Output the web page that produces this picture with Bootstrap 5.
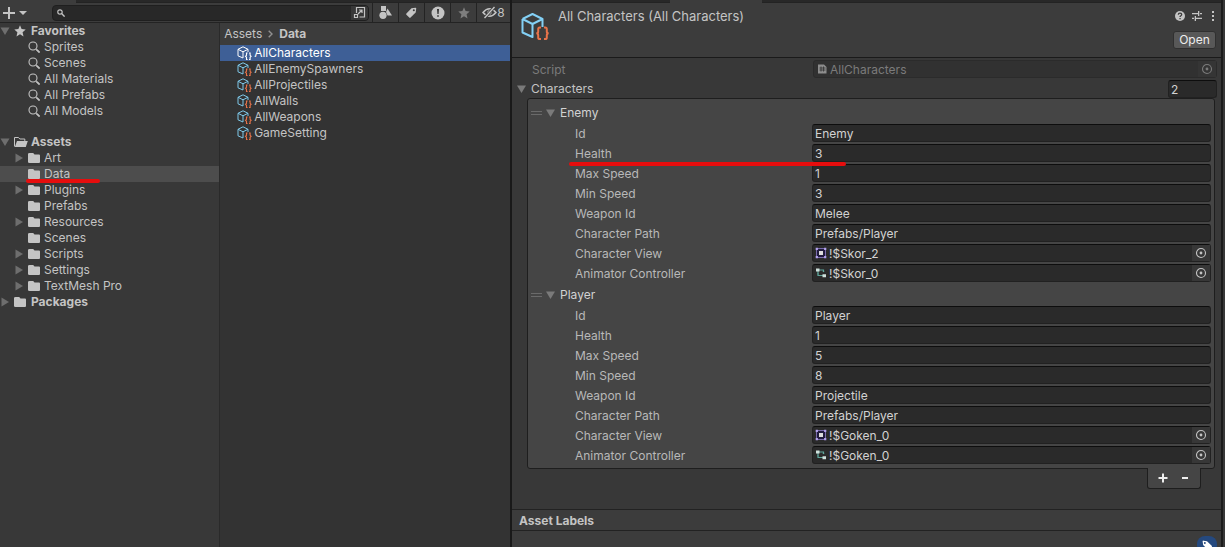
<!DOCTYPE html>
<html lang="en">
<head>
<meta charset="utf-8">
<meta name="viewport" content="width=device-width, initial-scale=1">
<title>Project and Inspector</title>
<link href="https://cdn.jsdelivr.net/npm/bootstrap@5.3.0/dist/css/bootstrap.min.css" rel="stylesheet">
<style>
body{font-family:Inter,"Noto Sans",sans-serif;font-size:12px;line-height:16px;color:#c4c4c4;background:#383838}
svg{display:block;flex:none;fill:currentColor}
a{color:inherit;text-decoration:none}
button{font:inherit;color:inherit}
.editor{min-width:900px}
.project-pane{flex:510 1 0;border-right:2px solid #191919;min-width:0;box-sizing:content-box}
.inspector-pane{flex:709 1 0;border-right:2px solid #1c1c1c;min-width:0;box-sizing:content-box}
.edge-strip{flex:0 0 2px;background:#383838}
.tab-strip{flex:none;height:3px;background:#282828;border-bottom:1px solid #232323}
.tab-strip span{background:#3c3c3c;height:3px}
.toolbar-row{flex:none;height:20px;background:#3c3c3c;border-bottom:1px solid #232323}
.tool-add{width:52px;padding:0 0 0 3px!important;gap:4px}
.search-field{background:#282828;border:1px solid #1f1f1f;border-radius:4px;height:16px;overflow:hidden;margin-right:3px}
.search-field input{background:none;border:0;outline:0;color:inherit;min-width:0;padding:0;height:14px}
.search-field button{background:#383838;width:17px;height:14px}
.tool-btn{width:26px;height:19px;border-left:1px solid #232323!important}
.tool-btn.wide{width:34px}
.flat{background:none;border:0;padding:0;display:flex;align-items:center;justify-content:center}
.tree-pane{flex:220 1 0;background:#383838;border-right:1px solid #2a2a2a;min-width:0}
.files-pane{flex:291 1 0;background:#333;min-width:0}
.tree-row{display:flex;align-items:center;height:16px;position:relative;white-space:nowrap}
.tree-row .twist{width:14px;flex:none;color:#6e6e6e}
.tree-row .glyph{width:17px;flex:none}
.tree-row.sub{padding-left:14px}
.tree-row.sub .glyph{width:16px}
.tree-row.active{background:#4d4d4d}
.gap-row{height:15px}
.crumbs{height:22px;background:#3c3c3c;padding-left:4px}
.crumbs svg{margin:0 6px}
.file-row{display:flex;align-items:center;height:16px;padding-left:17px;gap:2px;--cube:#7fc9ea;--brace:#e8734a}
.file-row.active{background:#3e5f96;color:#fff;--cube:#fff;--brace:#fff}
.red-mark{position:absolute;height:4px;border-radius:2px;background:#e60d0d;z-index:2}
.mark-data{left:26px;top:13px;width:74px}
.mark-health{left:-6px;top:18px;width:277px}
.head-bar{flex:none;height:55px;background:#3c3c3c;border-bottom:1px solid #1a1a1a;--cube:#83d0f5;--brace:#e8734a;padding:5px 5px 0 8px;gap:8px}
.head-bar .asset-name{font-size:13px}
.head-tools{gap:5px;margin-bottom:7px}
.btn-open{background:#585858;border:1px solid #303030;border-radius:3px;color:#eee;width:43px;height:18px;padding:0;line-height:16px}
.prop-row{display:flex;align-items:center;height:18px;margin-bottom:2px;position:relative}
.prop-row label{flex:none}
.field-box{display:flex;align-items:center;flex:1 1 0;min-width:0;height:18px;background:#2a2a2a;border:1px solid #212121;border-top-color:#0d0d0d;border-radius:3px;color:#d2d2d2;padding:0 0 0 2px;outline:0}
.field-box input{background:none;border:0;outline:0;color:inherit;min-width:0;flex:1;padding:2px 0 0 2px;height:16px}
.field-box .pick{width:18px;height:16px;background:#373737;color:#c4c4c4}
.disabled-row{color:#7b7b7b}
.disabled-row .field-box{background:#313131;border-color:#2b2b2b;color:#7b7b7b}
.disabled-row .pick{background:#353535;color:#7b7b7b}
.script-icon{margin:0 1px}
.script-label{width:281px;padding-top:2px}
.prop-label{width:237px;color:#b8b8b8;padding-top:2px}
.props-body{padding-top:2px}
.list-box{background:#454545;border:1px solid #1e1e1e;border-radius:3px;margin:0 6px 0 15px;padding:4px 3px 1px 0}
.item-head{display:flex;align-items:center;height:20px;padding-left:3px;color:#d2d2d2;margin-bottom:1px}
.item-head .grip{color:#6a6a6a;width:14px}
.item-head .twist,.list-head .twist{color:#7a7a7a}
.item-props{padding-left:47px;margin-bottom:3px}
.list-foot{width:54px;height:21px;background:#454545;border:1px solid #1e1e1e;border-top:0;border-radius:0 0 3px 3px;margin:-1px 20px 0 auto;position:relative;color:#eee}
.list-foot button{width:22px;height:20px}
.size-field{flex:0 0 49px}
.labels-bar{flex:none;height:22px;background:#3c3c3c;border-top:1px solid #222;border-bottom:1px solid #222;padding-left:7px;line-height:22px;margin-top:20px}
.labels-body{background:#3c3c3c;flex:1;padding:5px 4px 0 0}
.tag-btn{width:20px;height:17px;border-radius:8px;background:#25497f;color:#fff}
</style>
</head>
<body>
<svg width="0" height="0" class="position-absolute" aria-hidden="true">
<symbol id="down" viewBox="0 0 10 10"><path d="M.5 1.5h9L5 9z"/></symbol>
<symbol id="right" viewBox="0 0 10 10"><path d="M1.5.5v9L9 5z"/></symbol>
<symbol id="folder" viewBox="0 0 13 12"><path d="M1.500 1h3.700l1.300 1.500h4.500q1 0 1 1v6.500q0 1-1 1h-9.500q-1.500 0-1.500-1v-8q0-1 1.500-1z"/></symbol>
<symbol id="folder-open" viewBox="0 0 14 12"><path d="M.5 10.500v-9h4l1.300 1.500h5v2" fill="none" stroke="currentColor"/><path d="M3 5h10.800l-2 6H.8z"/></symbol>
<symbol id="lens" viewBox="0 0 13 13"><circle cx="5" cy="5" r="4" fill="none" stroke="currentColor" stroke-width="1.100"/><path d="M8.300 8.300l1 .2 2.500 2.500-.8.800-2.500-2.500z" stroke="currentColor" stroke-width=".8"/></symbol>
<symbol id="star" viewBox="0 0 12 12"><path d="M6 .3l1.600 3.800 4.100.4-3.100 2.700.9 4.200L6 9.200l-3.500 2.200.9-4.200L.3 4.500l4.100-.4z"/></symbol>
<symbol id="asset" viewBox="0 0 30 30"><path d="M2.500 7L12.500 2 22.500 7V15M2.500 7V20.500L12.500 25V12L2.500 7M12.500 12L22.500 7" fill="none" stroke="var(--cube)" stroke-width="2" stroke-linejoin="round"/><path d="M21 15.500h-1.200q-1.600 0-1.600 1.700v2.200q0 1.700-1.800 1.900 1.800.2 1.800 1.900v2.200q0 1.700 1.600 1.700H21M24 15.500h1.200q1.600 0 1.600 1.700v2.200q0 1.700 1.800 1.900-1.800.2-1.800 1.900v2.200q0 1.700-1.600 1.700H24" fill="none" stroke="var(--brace)" stroke-width="2"/></symbol>
<symbol id="asset-s" viewBox="0 0 15 14"><path d="M1 3.300L6 .8l5 2.500V6M1 3.300v6.500L6 12V5.800L1 3.300M6 5.800l5-2.500" fill="none" stroke="var(--cube)" stroke-linejoin="round"/><path d="M10.600 7H9.500v2.300l-1 1 1 1v2.200h1.100M12 7h1.100v2.300l1 1-1 1v2.200H12" fill="none" stroke="var(--brace)" stroke-width="1.100"/></symbol>
<symbol id="target" viewBox="0 0 12 12"><circle cx="6" cy="6" r="4.500" fill="none" stroke="currentColor" stroke-width="1.100"/><circle cx="6" cy="6" r="1.400"/></symbol>
<symbol id="sprite" viewBox="0 0 12 12"><path d="M1.500 1.500h9v9h-9z" fill="#211b3d" stroke="#8d7cc9" stroke-width=".8"/><path d="M.7.7h2.200v2.200H.7zM9.100.7h2.200v2.200H9.100zM.7 9.100h2.200v2.200H.7zM9.100 9.100h2.200v2.200H9.100z" fill="#b3a2ee"/><path d="M4 4h4v4H4z" fill="#ddd"/></symbol>
<symbol id="animator" viewBox="0 0 12 12"><path d="M3 3h5.500v2M3 3v5.500h5" fill="none" stroke="#5fa69b" stroke-width="1.200"/><path d="M1 1.500h3.500v3H1zM7.500 7.200H11v3H7.500z" fill="#cfe0dc"/><path d="M2 6.500l1 1.200 1-1.200zM7.500 4l1 1.200 1-1.200z" fill="#5fa69b"/></symbol>
<symbol id="tag" viewBox="0 0 14 14"><path fill-rule="evenodd" d="M1.500 8L7 2.500l4.200-.6q1-.1.900.9L11.500 7 6 12.500q-.7.600-1.400 0L1.500 9.400q-.6-.7 0-1.400zM9.500 3.500a1.100 1.100 0 100 2.200 1.100 1.100 0 000-2.200z"/></symbol>
<symbol id="grip" viewBox="0 0 11 5"><path d="M0 0h11v1H0zM0 3h11v1H0z"/></symbol>
</svg>

<div class="editor d-flex vh-100 overflow-hidden">
  <section class="project-pane d-flex flex-column">
    <div class="tab-strip"><span class="d-block" style="width:76px"></span></div>
    <div class="toolbar-row d-flex align-items-center">
      <button class="flat tool-add justify-content-start" aria-label="Add"><svg width="12" height="12" viewBox="0 0 12 12"><path d="M5 0h2v5h5v2H7v5H5V7H0V5h5z"/></svg><svg width="8" height="4" viewBox="0 0 8 4"><path d="M0 0h8L4 4z"/></svg></button>
      <div class="search-field d-flex align-items-center flex-fill">
        <svg class="mx-1" width="8" height="8" viewBox="0 0 8 8"><circle cx="3" cy="3" r="2.200" fill="none" stroke="currentColor" stroke-width="1.200"/><path d="M4.600 4.600l3 3" stroke="currentColor" stroke-width="1.400"/></svg>
        <input class="flex-fill" type="text" aria-label="Search">
        <button class="flat" aria-label="Open in search"><svg width="13" height="13" viewBox="0 0 13 13"><path d="M3.500 7V1.500h8v9.500H6.500M1.500 8.500h3v3h-3zM5 8l4-4M6 4h3v3" fill="none" stroke="currentColor" stroke-width="1.200"/></svg></button>
      </div>
      <button class="flat tool-btn" aria-label="Filter by type"><svg width="13" height="14" viewBox="0 0 13 14"><path d="M2 0h5v5H2z"/><circle cx="4" cy="9.300" r="3.600"/><path d="M8.500 2.500L13 9.500H8.500L7 6z"/></svg></button>
      <button class="flat tool-btn" aria-label="Filter by label"><svg width="13" height="13"><use href="#tag"/></svg></button>
      <button class="flat tool-btn" aria-label="Filter by log"><svg width="14" height="14" viewBox="0 0 14 14"><circle cx="7" cy="7" r="6.500"/><path d="M6 3h2l-.4 5H6.400zM6.200 9.200h1.600v1.600H6.200z" fill="#333"/></svg></button>
      <button class="flat tool-btn" aria-label="Favorite"><svg width="12" height="12" color="#7d7d7d"><use href="#star"/></svg></button>
      <button class="flat tool-btn wide" aria-label="Hidden packages"><svg width="15" height="13" viewBox="0 0 15 13"><path d="M1 6.500Q7.500-1 14 6.500 7.500 14 1 6.500z" fill="none" stroke="currentColor" stroke-width="1.500"/><circle cx="7.500" cy="6.500" r="2.200"/><path d="M2.500 12L12.500 1" stroke="#3c3c3c" stroke-width="3"/><path d="M2.500 12L12.500 1" stroke="currentColor" stroke-width="1.400"/></svg>8</button>
    </div>
    <div class="d-flex flex-fill overflow-hidden">
      <nav class="tree-pane" id="tree" aria-label="Folders"></nav>
      <div class="files-pane">
        <div class="crumbs d-flex align-items-center"><a href="#">Assets</a><svg width="5" height="8" viewBox="0 0 5 8"><path d="M.7.700L4 4 .7 7.300" fill="none" stroke="#909090" stroke-width="1.400"/></svg><a href="#" class="fw-bold">Data</a></div>
        <div id="files"></div>
      </div>
    </div>
  </section>

  <section class="inspector-pane d-flex flex-column">
    <div class="tab-strip"><span class="d-block" style="width:92px;margin-left:158px"></span></div>
    <header class="head-bar d-flex align-items-start">
      <svg class="mt-1" width="30" height="30"><use href="#asset"/></svg>
      <div class="asset-name flex-fill">All Characters (All Characters)</div>
      <div class="d-flex flex-column align-items-end">
        <div class="head-tools d-flex align-items-center">
          <button class="flat" aria-label="Help"><svg width="12" height="16" viewBox="0 0 12 16"><circle cx="6" cy="8" r="5"/><path d="M4.300 6.700q0-1.600 1.700-1.600t1.700 1.400q0 .8-.9 1.300-.8.400-.8 1.200" fill="none" stroke="#3c3c3c" stroke-width="1.300"/><path d="M5.400 10h1.300v1.200H5.400z" fill="#3c3c3c"/></svg></button>
          <button class="flat" aria-label="Presets"><svg width="12" height="16" viewBox="0 0 12 16"><path d="M1 5h6v1.200H1zM9 5h2v1.200H9zM7 3h1.300v5H7zM1 9.800h2V11H1zM5 9.800h6V11H5zM3.700 8H5v5H3.700z"/></svg></button>
          <button class="flat" aria-label="More"><svg width="8" height="16" viewBox="0 0 8 16"><path d="M4 3h2v2H4zM4 7h2v2H4zM4 11h2v2H4z"/></svg></button>
        </div>
        <button class="btn-open">Open</button>
      </div>
    </header>
    <div class="props-body">
      <div class="prop-row disabled-row ms-3 ps-1 me-1">
        <label class="script-label" for="script">Script</label>
        <div class="field-box"><svg class="script-icon" width="10" height="12" viewBox="0 0 10 12"><path d="M1 1.500h6l2.500 2.500v6.500H1z" fill="#8d8d8d"/><path d="M4 3.500v5M6.500 3.500v5M2.500 5h6M2.500 7h6" stroke="#333" stroke-width=".8"/></svg><input id="script" value="AllCharacters" disabled><button class="flat pick" aria-label="Pick script" disabled><svg width="12" height="12"><use href="#target"/></svg></button></div>
      </div>
      <div class="prop-row list-head mb-0 me-1 ps-1">
        <svg class="twist" width="11" height="10"><use href="#down"/></svg>
        <label class="flex-fill ps-1" for="count">Characters</label>
        <input class="field-box size-field" id="count" value="2">
      </div>
      <div class="list-box" id="characters"></div>
      <div class="list-foot d-flex justify-content-center"><button class="flat" aria-label="Add item"><svg width="10" height="10" viewBox="0 0 10 10"><path d="M4 .5h2V4h3.500v2H6v3.500H4V6H.5V4H4z"/></svg></button><button class="flat" aria-label="Remove item"><svg width="6" height="10" viewBox="0 0 6 10"><path d="M0 4h6v2H0z"/></svg></button></div>
    </div>
    <div class="labels-bar fw-bold">Asset Labels</div>
    <div class="labels-body d-flex justify-content-end align-items-start"><button class="flat tag-btn" aria-label="Edit labels"><svg width="12" height="12" viewBox="0 0 14 14"><use href="#tag" transform="matrix(-1 0 0 1 14 0)"/></svg></button></div>
  </section>
  <div class="edge-strip"></div>
</div>

<script>
const icon=(n,w,h)=>`<svg width="${w}" height="${h}"><use href="#${n}"/></svg>`;
const row=(name,glyph,o={})=>`<a href="#" class="tree-row ${o.sub?'sub':''} ${o.active?'active':''} ${o.bold?'fw-bold':''}"><span class="twist">${o.twist?icon(o.twist,10,10):''}</span><span class="glyph">${glyph}</span>${name}${o.active?'<span class="red-mark mark-data"></span>':''}</a>`;
const lens=icon('lens',13,13),folder=icon('folder',13,12);
document.getElementById('tree').innerHTML=
  row('Favorites',icon('star',12,12),{bold:1,twist:'down'})+
  ['Sprites','Scenes','All Materials','All Prefabs','All Models'].map(n=>row(n,lens,{sub:1})).join('')+
  '<div class="gap-row"></div>'+
  row('Assets',icon('folder-open',14,12),{bold:1,twist:'down'})+
  [['Art',1],['Data',0],['Plugins',1],['Prefabs',0],['Resources',1],['Scenes',0],['Scripts',1],['Settings',1],['TextMesh Pro',1]]
    .map(([n,t])=>row(n,folder,{sub:1,twist:t&&'right',active:n==='Data'})).join('')+
  row('Packages',folder,{bold:1,twist:'right'});
document.getElementById('files').innerHTML=['AllCharacters','AllEnemySpawners','AllProjectiles','AllWalls','AllWeapons','GameSetting']
  .map((n,i)=>`<a href="#" class="file-row ${i?'':'active'}">${icon('asset-s',15,14)}${n}</a>`).join('');
const names=['Id','Health','Max Speed','Min Speed','Weapon Id','Character Path','Character View','Animator Controller'];
const items=[['Enemy','3','1','3','Melee','Prefabs/Player','!$Skor_2','!$Skor_0'],['Player','1','5','8','Projectile','Prefabs/Player','!$Goken_0','!$Goken_0']];
document.getElementById('characters').innerHTML=items.map((v,k)=>`<div class="item-head"><span class="grip">${icon('grip',11,5)}</span><svg class="twist" width="11" height="10"><use href="#down"/></svg><span class="ps-1">${v[0]}</span></div><div class="item-props">`+
  names.map((n,i)=>{const id=`f${k}-${i}`,ref=i>5;
    return `<div class="prop-row"><label class="prop-label" for="${id}">${n}</label>`+
      (ref?`<div class="field-box">${icon(i===6?'sprite':'animator',12,12)}<input id="${id}" value="${v[i]}"><button class="flat pick" aria-label="Pick ${n}">${icon('target',12,12)}</button></div>`
          :`<input class="field-box" id="${id}" value="${v[i]}">`)+
      (k===0&&i===1?'<span class="red-mark mark-health"></span>':'')+'</div>';}).join('')+'</div>').join('');
</script>
<script src="https://cdn.jsdelivr.net/npm/bootstrap@5.3.0/dist/js/bootstrap.bundle.min.js"></script>
</body>
</html>
